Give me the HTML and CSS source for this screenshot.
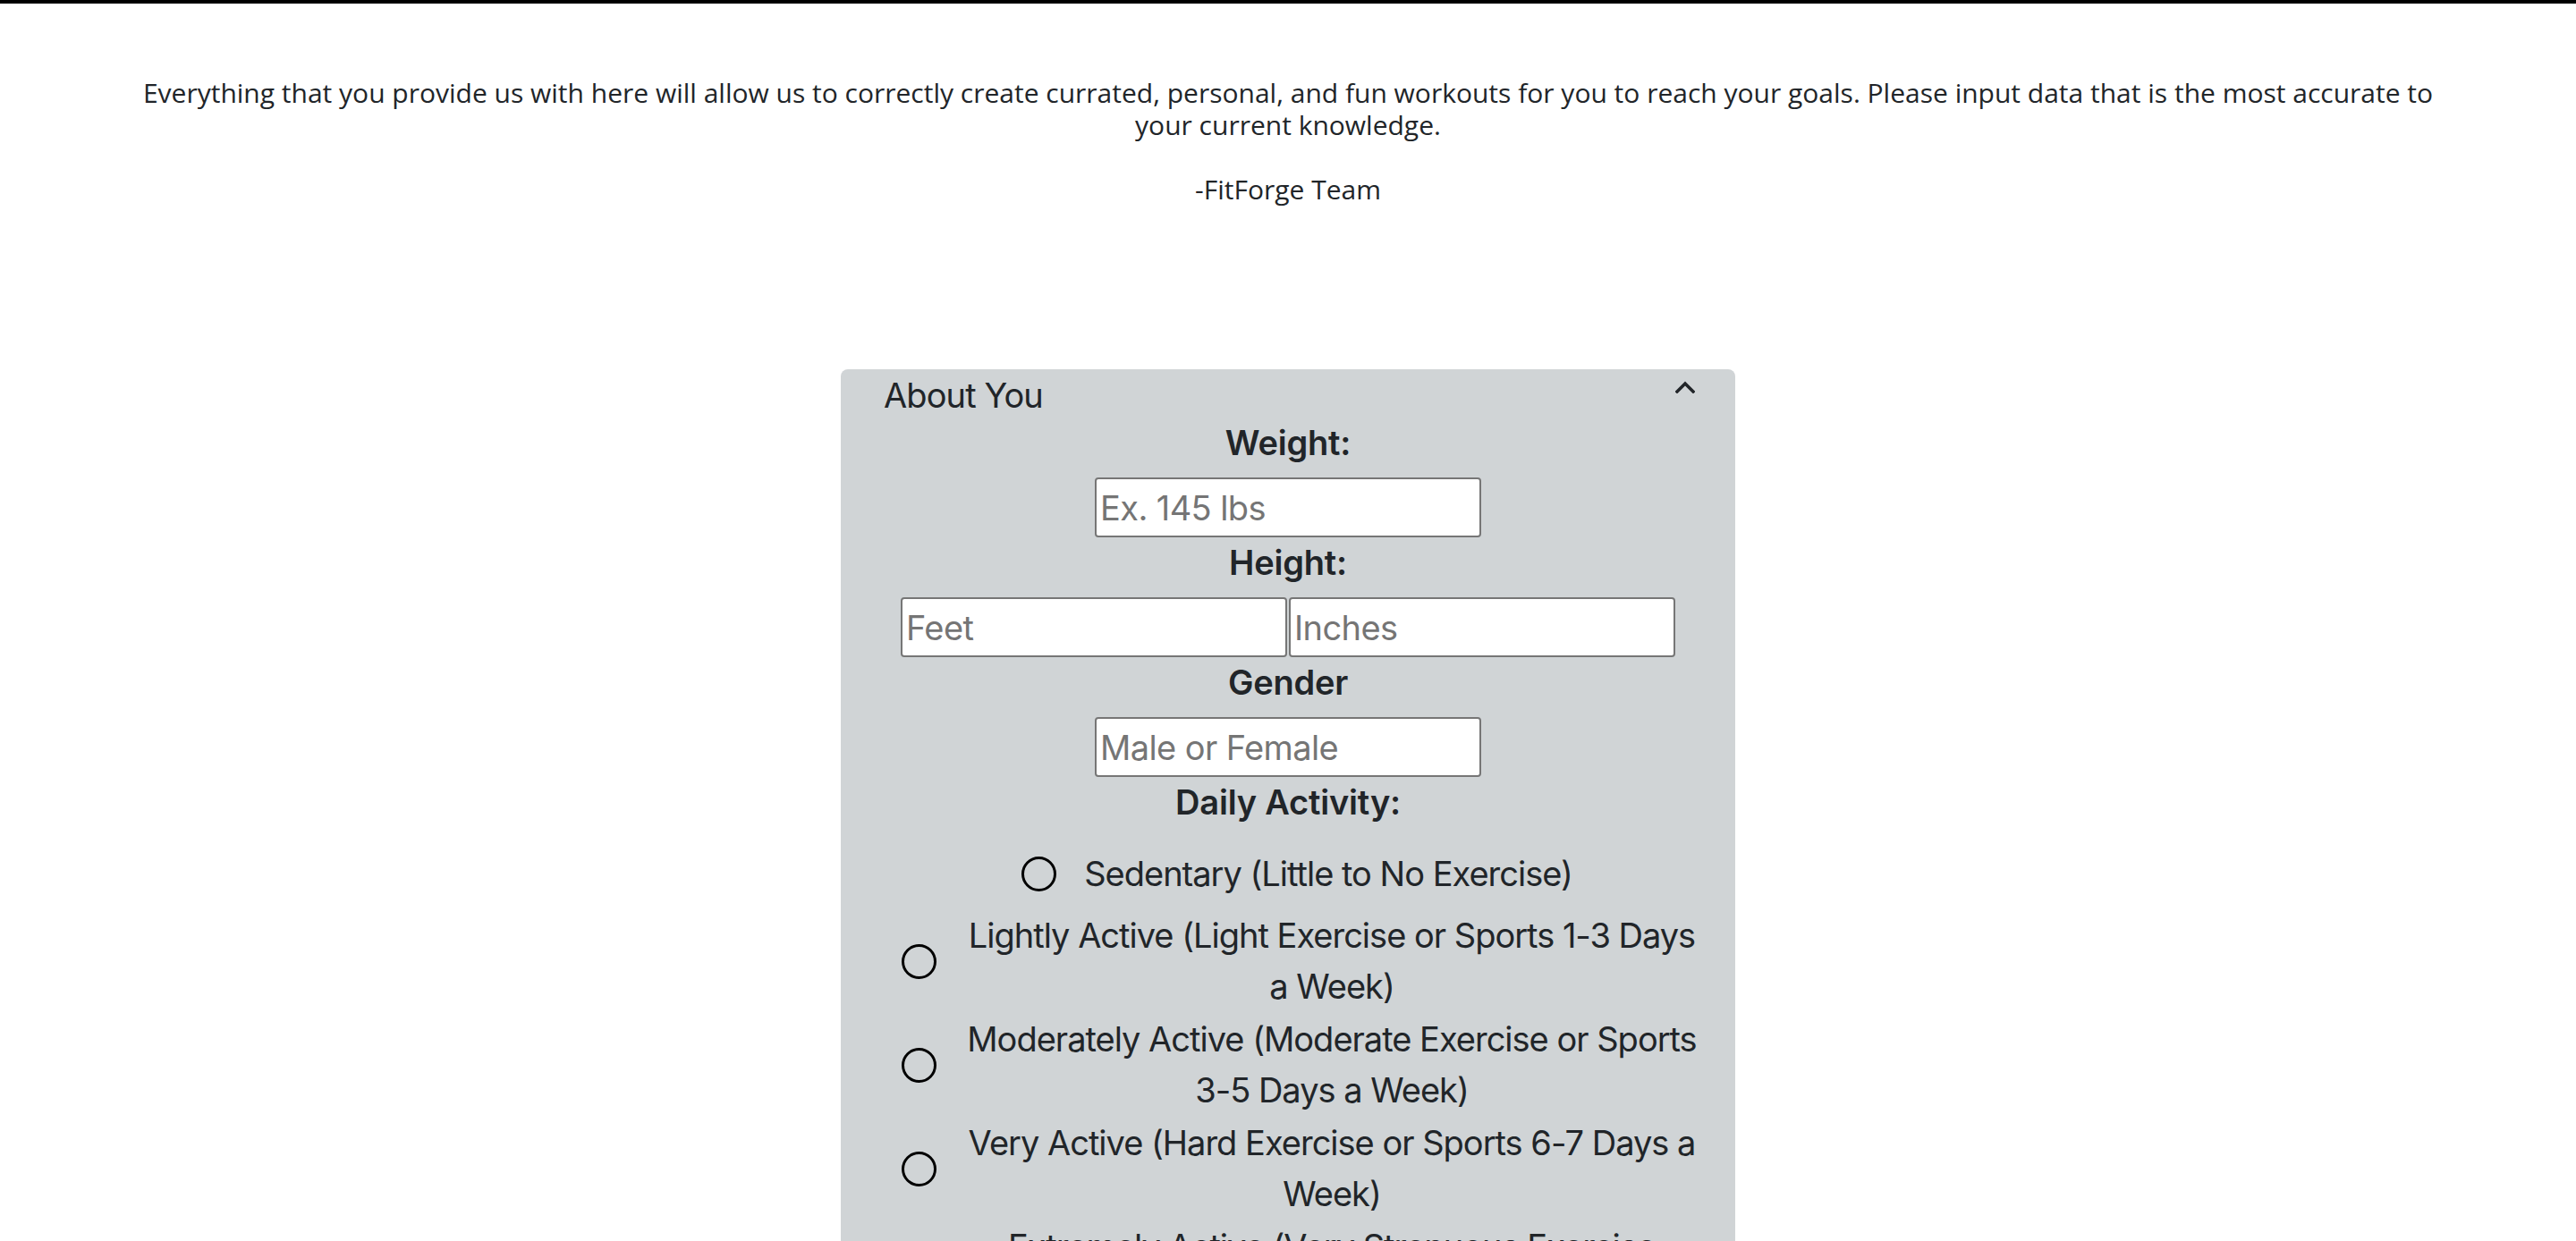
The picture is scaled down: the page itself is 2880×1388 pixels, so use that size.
FILE: index.html
```html
<!DOCTYPE html>
<html lang="en">
<head>
<meta charset="utf-8">
<title>FitForge - About You</title>
<link rel="stylesheet" href="styles.css">
</head>
<body>
<div class="topbar"></div>
<p class="intro">Everything that you provide us with here will allow us to correctly create currated, personal, and fun workouts for you to reach your goals. Please input data that is the most accurate to your current knowledge.<br><br>-FitForge Team</p>
<section class="card">
  <div class="card-header">
    <span class="card-title">About You</span>
    <svg class="chevron" width="22" height="14" viewBox="0 0 22 14"><polyline points="2,12 11,3 20,12" fill="none" stroke="#212529" stroke-width="3.5" stroke-linecap="square"/></svg>
  </div>
  <div class="card-body">
    <label class="field-label">Weight:</label>
    <div class="field-row"><input class="field" type="text" placeholder="Ex. 145 lbs"></div>
    <label class="field-label">Height:</label>
    <div class="field-row"><input class="field" type="text" placeholder="Feet"><input class="field" type="text" placeholder="Inches"></div>
    <label class="field-label">Gender</label>
    <div class="field-row"><input class="field" type="text" placeholder="Male or Female"></div>
    <label class="field-label">Daily Activity:</label>
    <div class="options">
      <div class="option option-single"><input class="radio" type="radio" name="act"><span class="option-text">Sedentary (Little to No Exercise)</span></div>
      <div class="option"><input class="radio" type="radio" name="act"><span class="option-text">Lightly Active (Light Exercise or Sports 1-3 Days a Week)</span></div>
      <div class="option"><input class="radio" type="radio" name="act"><span class="option-text">Moderately Active (Moderate Exercise or Sports 3-5 Days a Week)</span></div>
      <div class="option"><input class="radio" type="radio" name="act"><span class="option-text">Very Active (Hard Exercise or Sports 6-7 Days a Week)</span></div>
      <div class="option"><input class="radio" type="radio" name="act"><span class="option-text">Extremely Active (Very Strenuous Exercise Everyday and Physical Job)</span></div>
    </div>
  </div>
</section>
</body>
</html>
```
FILE: styles.css
```css
html, body {
  margin: 0;
  padding: 0;
  background: #fff;
}
body {
  font-family: "Open Sans", "Noto Sans", sans-serif;
  color: #212529;
}
.topbar {
  height: 4px;
  background: #000;
}
.intro {
  margin: 82px 0 0;
  padding: 0 140px;
  text-align: center;
  font-size: 30px;
  line-height: 36px;
}
.card {
  width: 1000px;
  margin: 183px auto 0;
  background: #d0d4d6;
  border-radius: 8px 8px 0 0;
  font-family: Inter, "Liberation Sans", sans-serif;
  color: #212529;
  padding-bottom: 40px;
}
.card-header {
  display: flex;
  justify-content: space-between;
  align-items: flex-start;
  height: 54px;
  padding: 2px 45px 0 48px;
  box-sizing: border-box;
}
.card-title {
  font-size: 38px;
  line-height: 54px;
  letter-spacing: -0.9px;
}
.chevron {
  margin-top: 11px;
}
.card-body {
  display: flex;
  flex-direction: column;
}
.field-label {
  display: block;
  text-align: center;
  font-size: 38px;
  line-height: 56px;
  font-weight: 600;
  margin-bottom: 11px;
  letter-spacing: -0.2px;
}
.field-row {
  display: flex;
  justify-content: center;
  gap: 2px;
}
.field {
  width: 432px;
  height: 67px;
  box-sizing: border-box;
  border: 2px solid #767676;
  border-radius: 4px;
  background: #fff;
  padding: 0 4px;
  margin: 0;
  font-family: Inter, "Liberation Sans", sans-serif;
  font-size: 38px;
  letter-spacing: -0.6px;
  color: #212529;
}
.field::placeholder {
  color: #757575;
}
.options {
  display: flex;
  flex-direction: column;
  gap: 2px;
  padding: 7px 40px 0 68px;
}
.option {
  display: flex;
  align-items: center;
  justify-content: center;
  font-size: 38px;
  line-height: 57px;
  letter-spacing: -1px;
}
.option-single {
  min-height: 68px;
  margin-bottom: 5px;
  padding-right: 8px;
}
.radio {
  appearance: none;
  -webkit-appearance: none;
  flex-shrink: 0;
  width: 39px;
  height: 39px;
  margin: 0 31px 0 0;
  border: 3px solid #000;
  border-radius: 50%;
  background: transparent;
  box-sizing: border-box;
}
.option-text {
  text-align: center;
}
```
